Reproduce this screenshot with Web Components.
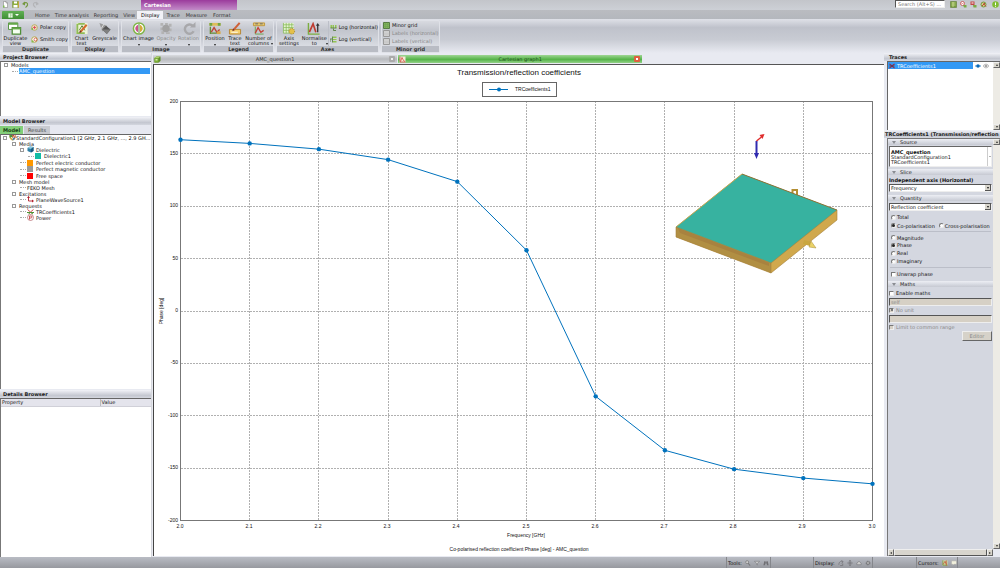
<!DOCTYPE html>
<html lang="en">
<head>
<meta charset="utf-8">
<title>CADFEKO results</title>
<style>
html, body { margin: 0; height: 100%; }
body { font: 5px/6px "DejaVu Sans", sans-serif; color: #111; background: #e8eaf1; overflow: hidden; }
</style>
</head>
<body>
<fk-app></fk-app>
<script>
const ICONS = {
  file: '<path d="M3 1h5l3 3v9H3z" fill="#fff" stroke="#777"/><path d="M8 1v3h3" fill="none" stroke="#777"/><path d="M2 9h3v4H2z" fill="#7dbd4b"/>',
  save: '<path d="M1 1h12v12H1z" fill="#8cae3d" stroke="#758d37"/><path d="M4 1h6v4H4zM3 8h8v5H3z" fill="#fff"/><path d="M12 1h2v12h-2" fill="#c7a43a"/>',
  undo: '<path d="M3 5c5-4 9-1 8 3-1 3-3 4-4 5" fill="none" stroke="#74983e" stroke-width="2.4"/><path d="M0 6l6-5v8z" fill="#74983e"/>',
  redo: '<path d="M11 5c-5-4-9-1-8 3 1 3 3 4 4 5" fill="none" stroke="#b2b3b6" stroke-width="2.4"/><path d="M14 6L8 1v8z" fill="#b2b3b6"/>',
  dup: '<path d="M0 1h10v7H0z" fill="#fff" stroke="#4f8f39"/><path d="M0 1h10v2H0z" fill="#65a84a"/><path d="M4 6h9v7H4z" fill="#f4fff0" stroke="#4f8f39" stroke-width="1.4"/><path d="M4 6h9v2H4z" fill="#65a84a"/>',
  polar: '<circle cx="7" cy="7" r="5.5" fill="#fff" stroke="#b6a94e" stroke-width="2"/><path d="M3 7h8M7 3v8" stroke="#c34"/><circle cx="7" cy="7" r="2.5" fill="#d9534a"/><path d="M1 8h3v4H1z" fill="#86b84a"/>',
  smith: '<circle cx="7" cy="7" r="5.5" fill="#fff" stroke="#b6a94e" stroke-width="2"/><circle cx="9" cy="7" r="3" fill="none" stroke="#c43" stroke-width="1.5"/><path d="M1 9h4v4H1z" fill="#86b84a"/>',
  charttext: '<path d="M1 1h12v12H1z" fill="#eef3d8"/><path d="M1 2h2v11H1zM3 1h7v2H3zM3 11h7v2H3z" fill="#8fbb55"/><path d="M4 9l3-5 3 5" fill="none" stroke="#567b2b"/><path d="M5 11l7-8" stroke="#d36b2c" stroke-width="2.2"/><path d="M4 12l1-3 1.5 1.5z" fill="#633"/>',
  grey: '<path d="M1 1l8 3 1 5-6 1z" fill="#999"/><path d="M3 7l3-5" stroke="#ddd"/><path d="M4 8l4-4 5 4-4 5z" fill="#555"/><path d="M4 8h9l-4 5z" fill="#808080"/>',
  image: '<circle cx="7" cy="7" r="6" fill="#fff" stroke="#7fb546" stroke-width="1.6"/><path d="M7 2v10" stroke="#4a7f2d"/><path d="M6 3C2 5 2 9 6 11z" fill="#c9528c"/><path d="M8 3c4 2 4 6 0 8z" fill="#d6a63c"/>',
  opacity: '<path d="M1 1h3v3H1zM6 1h3v3H6zM10 2h3v3h-3zM1 6h3v3H1zM10 7h3v3h-3zM2 10h3v3H2zM7 11h4v2H7z" fill="#b3b3b3"/><circle cx="7" cy="7" r="4" fill="#a2a2a2"/>',
  rotate: '<path d="M11 4a5 5 0 1 0 1 6" fill="none" stroke="#a8a8ab" stroke-width="2.6"/><path d="M8 6h6V0z" fill="#a8a8ab"/>',
  position: '<path d="M1 1h12v3H1z" fill="#dfbd5a"/><path d="M1 1h3v3H1zM10 1h3v3h-3z" fill="#70a545"/><path d="M2 13V5M2 12h7" stroke="#658d37" stroke-width="1.4"/><path d="M3 11l3-5 3 5 3-3" fill="none" stroke="#bd4636" stroke-width="1.5"/><path d="M9 10h4v3H9z" fill="#d6a746"/>',
  trace: '<path d="M1 8h12v5H1z" fill="#f5d06e" stroke="#b58432"/><path d="M3 11h7" stroke="#fff"/><path d="M5 9l7-8" stroke="#cf6037" stroke-width="2.2"/><path d="M4 10l1-3 1.5 1.5z" fill="#633"/>',
  cols: '<path d="M1 1h12v3H1z" fill="#e5ca73" stroke="#c0953b"/><path d="M3 2h3M8 2h3" stroke="#666"/><path d="M3 5v8h9" fill="none" stroke="#6ca34b"/><path d="M3 12l3-6 3 5 3-2" fill="none" stroke="#c43f34" stroke-width="1.4"/>',
  axis: '<path d="M1 1h11v11H1z" fill="#e4f3cf"/><path d="M1 1v11h11M4 1v11M7 1v11M10 1v11M1 3h11M1 6h11M1 9h11" fill="none" stroke="#86b956" stroke-width=".8"/><circle cx="10" cy="10" r="3" fill="#e4c04a" stroke="#9d7a24" stroke-dasharray="1 1"/>',
  norm: '<path d="M1 1v12h12" fill="none" stroke="#7cad41" stroke-width="1.5"/><path d="M2 11L6 2l3 9" fill="none" stroke="#bf3d31" stroke-width="1.8"/><path d="M11 3v8" fill="none" stroke="#333" stroke-width="1.4"/><path d="M9 4l2-3 2 3z" fill="#333"/>',
  logh: '<path d="M1 2h3v6H1zM5 2h3v6H5zM10 2h3v6h-3z" fill="#93c453"/><path d="M1 8h12M7 9v4h5" fill="none" stroke="#4d7630" stroke-width="1.6"/>',
  logv: '<path d="M6 1h7v3H6zM6 6h7v2H6zM6 10h7v3H6z" fill="#93c453"/><path d="M5 1v12M0 12V6h4" fill="none" stroke="#4d7630" stroke-width="1.6"/>',
  minor: '<path d="M1 1h12v12H1z" fill="#81b45a" stroke="#567a44" stroke-width="2"/><path d="M5 1v12M9 1v12M1 5h12M1 9h12" stroke="#6d9f52"/>',
  gbox: '<path d="M1 1h12v12H1z" fill="#d0d0d0" stroke="#999" stroke-width="2"/><path d="M1 8h12" stroke="#bbb"/>',
  app: '<path d="M1 1h12v12H1z" fill="#e7f6e2"/><path d="M7 1v12M7 6h6" stroke="#57a64a"/>',
  cube: '<path d="M1 4l4-3h8v9l-4 3H1z" fill="#5d8a2a"/><path d="M1 4l4-3h8L9 4z" fill="#b0d26c"/><path d="M1 4h8v9H1z" fill="#7cad37"/><path d="M3 6h4v3H3z" fill="#d5ecaa"/>',
  graph: '<path d="M1 1h12v12H1z" fill="#f5e9d6"/><path d="M2 1v11h11" fill="none" stroke="#c44" stroke-width="1.5"/><path d="M3 11l3-8 3 6 3 2" fill="none" stroke="#d04538" stroke-width="1.5"/>',
  blue: '<path d="M1 4l5-3 7 1v8l-5 3-7-3z" fill="#2d7fa6"/><path d="M1 4l5-3 7 1-5 4z" fill="#8ecae0"/><path d="M8 6l5-4v8l-5 3z" fill="#195a80"/>',
  shield: '<path d="M1 1h12v5c0 4-4 7-6 7S1 10 1 6z" fill="#d9b33f"/><path d="M1 1h6v6H1z" fill="#4b9042"/><path d="M7 7h6c-1 4-4 6-6 6z" fill="#4d7cae"/><path d="M7 1h6v6H7z" fill="#c24a37"/><path d="M4 6l3 3 5-7" fill="none" stroke="#fff" stroke-width="1.5"/>',
  wave: '<path d="M3 1v9h9" fill="none" stroke="#b3202b" stroke-width="1.8"/><path d="M0 4l3-4 3 4zM10 7l4 3-4 3z" fill="#b3202b"/>',
  tr: '<path d="M1 3l6 5 6-5" fill="none" stroke="#c33" stroke-width="1.8"/><path d="M0 9h14M3 12l4-3 5 3" fill="none" stroke="#4f9134" stroke-width="2"/>',
  power: '<circle cx="7" cy="7" r="6" fill="#fff" stroke="#ad555a" stroke-width="1.3"/><path d="M5 11V4h3a2 2 0 0 1 0 4H5" fill="none" stroke="#b22" stroke-width="1.4"/>',
  trx: '<path d="M1 2l6 5 6-5M1 12l6-5 6 5" fill="none" stroke="#992c45" stroke-width="2.6"/><path d="M1 7h12" stroke="#473b55" stroke-width="2"/>',
  dot: '<path d="M0 7h14" stroke="#1c78c0" stroke-width="2"/><circle cx="7" cy="7" r="4" fill="#0a68b7"/>',
  eye: '<path d="M0 7c4-6 10-6 14 0-4 6-10 6-14 0z" fill="#ddd" stroke="#888"/><circle cx="7" cy="7" r="2.5" fill="#999"/>',
  t1: '<path d="M1 1h12v12H1z" fill="#749c3d" stroke="#567328"/><path d="M3 4h8M3 8h8M6 2v10" stroke="#dce7a4" stroke-width="1.4"/>',
  t2: '<circle cx="5" cy="5" r="4" fill="#fff" stroke="#c54444" stroke-width="1.6"/><path d="M6 8h7v5H8z" fill="#7aa945"/><path d="M3 5h4" stroke="#c33"/>',
  t3: '<path d="M1 1h8v7H1z" fill="#c34747"/><path d="M3 3h4v2H3z" fill="#fff"/><path d="M6 8h7v5H7z" fill="#7aa945"/>',
  t4: '<circle cx="7" cy="7" r="5" fill="#d6ce86" stroke="#74983d" stroke-width="2"/><path d="M4 10l6-6M7 5l5 6" stroke="#b64b34" stroke-width="2"/>',
  help: '<circle cx="7" cy="7" r="6.5" fill="#7fbd30"/><path d="M7 3v5M7 9.500v2" stroke="#fff" stroke-width="2"/>',
  g1: '<circle cx="5" cy="5" r="3.500" fill="#ccc" stroke="#777" stroke-width="1.6"/><path d="M7 7l5 6" stroke="#77777a" stroke-width="2.4"/>',
  g2: '<path d="M1 3h12L8 8v4L6 10V8z" fill="#d0d0d0" stroke="#77777a" stroke-width="1.4"/>',
  g3: '<path d="M1 12l2-9h3v3h2V3h3l2 9H9V8H5v4z" fill="#6f6f73"/>',
  g4: '<path d="M2 11c0-7 5-9 9-7M8 1l4 3-4 4M5 13h6V8" fill="none" stroke="#77777c" stroke-width="2"/>',
  g5: '<path d="M7 1v12M1 7h12M5 3l2-2 2 2M5 11l2 2 2-2" fill="none" stroke="#727276" stroke-width="2"/>',
  g6: '<path d="M2 7l5-4 5 4v4H2z" fill="#ccc" stroke="#77777a" stroke-width="1.4"/>',
  g7: '<circle cx="7" cy="7" r="4" fill="#aaa" stroke="#747478" stroke-width="3" stroke-dasharray="2 1"/>',
  note: '<path d="M1 2h12v8H7l-3 3v-3H1z" fill="#f1f0dd" stroke="#999"/>',
  cursor: '<path d="M1 1h12v12H1z" fill="#cfdc9b"/><path d="M2 1v11h11" fill="none" stroke="#587e2e" stroke-width="1.500"/><path d="M3 10l4-7 3 7M10 1v12" fill="none" stroke="#c2452f" stroke-width="1.600"/>'
};

function component(name, css, html, init) {
  const tpl = document.createElement('template');
  tpl.innerHTML = `<style>*{box-sizing:border-box}:host{box-sizing:border-box;display:block}${css}</style>${html}`;
  customElements.define(name, class extends HTMLElement {
    constructor() {
      super();
      this.attachShadow({ mode: 'open' }).append(tpl.content.cloneNode(true));
    }
    connectedCallback() { if (init) init(this, this.shadowRoot); }
  });
}

component('fk-icon', ':host{flex:none;width:7px;height:7px}svg{display:block;width:100%;height:100%}', '', (el, root) => {
  if (!root.querySelector('svg'))
    root.innerHTML += `<svg viewBox="0 0 14 14" aria-hidden="true">${ICONS[el.getAttribute('name')]}</svg>`;
});

component('fk-titlebar', `
  :host{display:flex;align-items:flex-start;height:10px;background:linear-gradient(#c3c5ca,#cdd0d6);}
  .quick{display:flex;gap:3px;width:141px;padding:1px 0 0 2px}
  .context{width:96px;height:10px;padding:2px 3px;color:#fff;font-weight:bold;line-height:6px;background:linear-gradient(#9b3b9c,#c28bc8)}
  .right{margin-left:auto;display:flex;gap:3px;padding:0 1px 0 0;align-items:center}
  input{font:inherit;width:50px;height:8px;margin:0 2px 0 0;padding:0 2px;border:1px solid #999;border-color:#555 #eee #eee #555;background:#fff}
  input::placeholder{color:#777}
`, `
  <div class="quick"><fk-icon name="file"></fk-icon><fk-icon name="save"></fk-icon><fk-icon name="undo"></fk-icon><fk-icon name="redo"></fk-icon></div>
  <div class="context">Cartesian</div>
  <div class="right"><input type="text" placeholder="Search (Alt+S) ..." aria-label="Search"><fk-icon name="t1"></fk-icon><fk-icon name="t2"></fk-icon><fk-icon name="t3"></fk-icon><fk-icon name="t4"></fk-icon><fk-icon name="help" style="margin-left:2px"></fk-icon></div>
`);

component('fk-tabs', `
  :host{display:flex;align-items:flex-end;height:9px;background:linear-gradient(#babcc1,#b4b7bd)}
  button{font:inherit;color:#333;border:0;background:none;height:8px;margin:0;padding:0 3px;line-height:8px;white-space:nowrap}
  .tight{padding:0 2px}
  .app{width:22px;display:flex;align-items:center;justify-content:center;gap:2px;margin:0 8px 0 2px;padding:0;background:linear-gradient(#61b055,#3f8f35);border-radius:1px 1px 0 0}
  .app fk-icon{width:5px;height:5px}
  .app i{border:2px solid transparent;border-top-color:#fff;border-bottom:0}
  .on{background:#f1f2f7;color:#000;padding:0 4px;}
`, `
  <button class="app" aria-label="Application menu"><fk-icon name="app"></fk-icon><i></i></button>
  <button>Home</button><button class="tight">Time analysis</button><button>Reporting</button><button class="tight">View</button><button class="on">Display</button><button>Trace</button><button>Measure</button><button>Format</button>
`);

component('fk-group', `
  :host{display:flex;flex-direction:column;height:33px;border:1px solid #dfe1e7;border-radius:2px;background:linear-gradient(#d8dae0,#c2c5cd 30%,#cfd2d9 60%,#e3e5eb)}
  .body{flex:1;display:flex;min-height:0}
  .name{height:6px;line-height:6px;font-weight:bold;text-align:center;color:#333;background:#b9bcc4}
`, '<div class="body"><slot></slot></div><div class="name"></div>', (el, root) => {
  root.querySelector('.name').textContent = el.getAttribute('label');
});

component('fk-tool', `
  button{font:inherit;color:inherit;width:100%;padding:1px 0 0;margin:0;border:0;background:none;display:flex;flex-direction:column;align-items:center}
  :host([off]){color:#888}
  fk-icon{width:14px;height:13px}
  span{line-height:5px;text-align:center;white-space:pre-line;padding-top:1px}
  i{display:none;border:1px solid transparent;border-top:2px solid #222;border-bottom:0;margin-top:3px}
  :host([menu]) i{display:block}
  :host([corner]) i{display:block;align-self:flex-end;margin-top:-3px}
`, '<button><fk-icon></fk-icon><span><slot></slot></span><i></i></button>', (el, root) => {
  const b = root.querySelector('button');
  b.disabled = el.hasAttribute('off');
  const icon = document.createElement('fk-icon');
  icon.setAttribute('name', el.getAttribute('icon'));
  root.querySelector('fk-icon').replaceWith(icon);
});

component('fk-small', `
  button{font:inherit;color:inherit;padding:0;margin:0;border:0;background:none;display:flex;align-items:center;gap:2px;white-space:nowrap}
  :host([off]){color:#888}
`, '<button><slot name="i"></slot><slot></slot></button>', (el, root) => {
  root.querySelector('button').disabled = el.hasAttribute('off');
});

component('fk-ribbon', `
  :host{display:flex;gap:2px;height:34px;padding:1px 2px 0;background:linear-gradient(#dfe1e8,#bfc2cb 25%,#c8cbd3 60%,#e8eaf1)}
  .col{display:flex;flex-direction:column;justify-content:space-around;padding:0 0 1px 3px}
  .sep{border-left:1px solid #bcbfc8}
`, `
  <fk-group label="Duplicate" style="width:67px"><fk-tool icon="dup" style="width:26px">Duplicate
view</fk-tool><div class="col"><fk-small><fk-icon slot="i" name="polar"></fk-icon>Polar copy</fk-small><fk-small><fk-icon slot="i" name="smith"></fk-icon>Smith copy</fk-small></div></fk-group>
  <fk-group label="Display" style="width:48px"><fk-tool icon="charttext" style="width:19px">Chart
text</fk-tool><fk-tool icon="grey" style="width:27px">Greyscale</fk-tool></fk-group>
  <fk-group label="Image" style="width:80px"><fk-tool icon="image" menu style="width:33px">Chart image</fk-tool><fk-tool icon="opacity" off menu style="width:22px">Opacity</fk-tool><fk-tool icon="rotate" off menu style="width:23px">Rotation</fk-tool></fk-group>
  <fk-group label="Legend" style="width:71px"><fk-tool icon="position" menu style="width:22px">Position</fk-tool><fk-tool icon="trace" style="width:18px">Trace
text</fk-tool><fk-tool icon="cols" corner style="width:29px">Number of
columns</fk-tool></fk-group>
  <fk-group label="Axes" style="width:103px"><fk-tool icon="axis" style="width:24px">Axis
settings</fk-tool><fk-tool icon="norm" corner style="width:27px">Normalise
to</fk-tool><div class="col sep" style="padding-left:1px"><fk-small><fk-icon slot="i" name="logh"></fk-icon>Log (horizontal)</fk-small><fk-small><fk-icon slot="i" name="logv"></fk-icon>Log (vertical)</fk-small></div></fk-group>
  <fk-group label="Minor grid" style="width:59px"><div class="col" style="padding-left:1px"><fk-small><fk-icon slot="i" name="minor"></fk-icon>Minor grid</fk-small><fk-small off><fk-icon slot="i" name="gbox"></fk-icon>Labels (horizontal)</fk-small><fk-small off><fk-icon slot="i" name="gbox"></fk-icon>Labels (vertical)</fk-small></div></fk-group>
`);

component('fk-heading', `
  :host{flex:none;height:8px;line-height:8px;padding-left:3px;font-weight:bold;color:#222;white-space:nowrap;overflow:hidden;background:linear-gradient(#f1f2f7,#c4c7d0 70%,#d4d7df)}
`, '<slot></slot>');

component('fk-node', `
  :host{display:flex;align-items:center;height:6px;white-space:nowrap;padding-left:calc(3px + 8px * var(--level, 0))}
  :host([tall]){height:7px}
  :host([root]){padding-left:2px}
  .box{flex:none;width:7px;display:flex}
  .box i{width:4px;height:4px;border:1px solid #999;background:#fff}
  .box b{width:6px;border-top:1px dotted #aaa}
  ::slotted(fk-icon){margin-right:2px}
  :host([root]) ::slotted(fk-icon){margin-right:0}
  :host([root]) .box{width:6px}
  ::slotted(.sw){flex:none;width:6px;height:6px;margin-right:3px}
  .t{flex:1;display:flex;align-items:center;min-width:0}
  :host([selected]) .t{background:#3399f5;color:#fff}
`, '<span class="box"></span><span class="t"><slot></slot></span>', (el, root) => {
  el.style.setProperty('--level', el.getAttribute('level') || 0);
  root.querySelector('.box').innerHTML = el.hasAttribute('open') ? '<i></i>' : '<b></b>';
});

component('fk-left', `
  :host{display:flex;flex-direction:column;width:152px;border-right:1px solid #d5d7dd}
  .tree{background:#fff;border-left:1px solid #777;border-top:1px solid #666;overflow:hidden;flex-basis:0;min-height:0}
  .tabs{display:flex;height:9px;align-items:flex-end;background:#e6e8f0}
  .tabs button{font:inherit;height:8px;line-height:8px;padding:0 4px;border:0;background:#c8cad0;color:#444;margin-right:1px}
  .tabs .on{background:#84cf79;color:#153d12;font-weight:bold;padding:0 3px}
  table{width:100%;border-collapse:collapse;line-height:7px}
  th{font-weight:normal;text-align:left;background:#e4e4ec;padding:0 1px;border-bottom:1px solid #d0d0d8}
  th + th{border-left:1px solid #bbb}
  fk-heading{margin-top:1px}
`, `
  <fk-heading style="margin-top:0">Project Browser</fk-heading>
  <div class="tree" style="flex-grow:54"><fk-node open>Models</fk-node><fk-node level="1" selected style="margin-right:1px">AMC_question</fk-node></div>
  <fk-heading>Model Browser</fk-heading>
  <div class="tabs"><button class="on">Model</button><button>Results</button></div>
  <div class="tree" style="flex-grow:257">
    <fk-node root open><fk-icon name="shield"></fk-icon>StandardConfiguration1 [2 GHz, 2.1 GHz, ..., 2.9 GH...</fk-node>
    <fk-node level="1" open>Media</fk-node>
    <fk-node level="2" open><fk-icon name="blue"></fk-icon>Dielectric</fk-node>
    <fk-node level="3" tall><span class="sw" style="background:#12bca5"></span>Dielectric1</fk-node>
    <fk-node level="2"><span class="sw" style="background:#ff9800"></span>Perfect electric conductor</fk-node>
    <fk-node level="2" tall><span class="sw" style="background:#999"></span>Perfect magnetic conductor</fk-node>
    <fk-node level="2"><span class="sw" style="background:#f00"></span>Free space</fk-node>
    <fk-node level="1" open>Mesh model</fk-node>
    <fk-node level="2">FEKO Mesh</fk-node>
    <fk-node level="1" open>Excitations</fk-node>
    <fk-node level="2"><fk-icon name="wave"></fk-icon>PlaneWaveSource1</fk-node>
    <fk-node level="1" open>Requests</fk-node>
    <fk-node level="2"><fk-icon name="tr"></fk-icon>TRCoefficients1</fk-node>
    <fk-node level="2"><fk-icon name="power"></fk-icon>Power</fk-node>
  </div>
  <fk-heading>Details Browser</fk-heading>
  <div class="tree" style="flex-grow:159"><table><colgroup><col style="width:66%"><col></colgroup><tr><th>Property</th><th>Value</th></tr></table></div>
`);

component('fk-chart', `
  :host{flex:1;min-height:0;background:#fff;border-top:1px solid #555;border-left:1px solid #444;font-family:"Liberation Sans",Arial,sans-serif}
  svg{display:block;width:100%;height:100%}
  text{font-size:5px;fill:#111}
  .title{font-size:8px}
  .grid line{stroke:#b0b0b0;stroke-dasharray:2 1}
`, '<svg viewBox="0 0 730 491" role="img" aria-label="Transmission/reflection coefficients"></svg>', (el, root) => {
  const values = [163.5, 160, 154.5, 144.5, 123.5, 58, -81.5, -133, -151, -159.5, -165];
  const X = i => 26.5 + i * 69.2;
  const Y = v => 36.5 + (200 - v) * 419 / 400;
  const snap = n => Math.floor(n) + .5;
  let s = '<g class="grid">', labels = '';
  for (let i = 0; i <= 10; i++) {
    if (i && i < 10) s += `<line x1="${snap(X(i))}" x2="${snap(X(i))}" y1="36" y2="455"/>`;
    labels += `<text x="${Math.round(X(i)) - 1}" y="463" text-anchor="middle">${(2 + i / 10).toFixed(1)}</text>`;
  }
  for (let v = 200; v >= -200; v -= 50) {
    if (Math.abs(v) < 200) s += `<line y1="${snap(Y(v))}" y2="${snap(Y(v))}" x1="27" x2="718"/>`;
    labels += `<text x="24" y="${Math.round(Y(v)) + 1}" text-anchor="end">${v}</text>`;
  }
  s += '</g><rect x="26.5" y="36.5" width="692" height="419" fill="none" stroke="#777"/>' + labels;
  s += `
    <text class="title" x="365" y="10" text-anchor="middle">Transmission/reflection coefficients</text>
    <rect x="328.5" y="17.500" width="74" height="14" fill="#fff" stroke="#666"/>
    <path d="M335 24.500h19" stroke="#0072bd"/><circle cx="345" cy="24.500" r="2" fill="#0072bd"/>
    <text x="361" y="26">TRCoefficients1</text>
    <text x="372" y="472" text-anchor="middle">Frequency [GHz]</text>
    <text x="365" y="486" text-anchor="middle">Co-polarised reflection coefficient Phase [deg] - AMC_question</text>
    <text transform="translate(9 246) rotate(-90)" text-anchor="middle">Phase [deg]</text>
    <polygon points="588,109 683,145 683,155 617,208 522,172 522,162" fill="#d0a84c"/>
    <polygon points="522,162 617,198 617,208 522,172" fill="#b18f43"/>
    <polygon points="524,163 615,198 615,201 526,168" fill="#a8823f"/>
    <path d="M638.500 129v-4h4.500v5" stroke="#b38e32" stroke-width="2" fill="none"/>
    <polygon points="588,109 683,145 617,198 522,162" fill="#37b2a0"/>
    <path d="M522 162L588 109" stroke="#c4a653" fill="none"/>
    <path d="M588 109L683 145" stroke="#8a7438" fill="none"/>
    <path d="M522 162V172L617 208L683 155V145L617 198V208M522 162L617 198" stroke="#a5803a" stroke-width=".6" fill="none"/>
    <path d="M649.500 177l7 2" stroke="#c9a63f" stroke-width="4"/><path d="M655 182l2-6 5 7z" fill="#ead268" stroke="#a88c34" stroke-width=".5"/>
    <path d="M602.500 76v13" stroke="#302bb0" stroke-width="2"/><path d="M600 88h5l-2.500 6z" fill="#302bb0"/>
    <path d="M602.500 76l5-4" stroke="#df2b2b" stroke-width="1.500"/><path d="M605.500 70l5-1-2 5z" fill="#df2b2b"/>
    <polyline fill="none" stroke="#0072bd" points="${values.map((v, i) => X(i) + ',' + Y(v)).join(' ')}"/>
    ${values.map((v, i) => `<circle cx="${X(i)}" cy="${Y(v)}" r="2.2" fill="#0072bd"/>`).join('')}`;
  root.querySelector('svg').innerHTML = s;
});

component('fk-center', `
  :host{flex:1;min-width:0;display:flex;flex-direction:column;padding:2px 0 1px 1px}
  .tabs{display:flex;gap:1px;height:9px;padding-bottom:1px}
  .tab{width:33.4%;display:flex;align-items:center;background:linear-gradient(#d9dbdf,#b7b9bd 50%,#d0d2d7);color:#333}
  .tab.on{background:linear-gradient(#9ed693,#55b348 55%,#93d288);color:#1c4d17}
  .tab button{font:inherit;color:inherit;border:0;background:none;padding:0;margin:0}
  .name{flex:1}
  .tab .x{width:6px;height:6px;margin-right:2px;background:#eee;border:2px solid #aaa;border-radius:1px}
  .on .x{background:#fff;border-color:#df6040}
  fk-icon{margin-left:1px}
`, `
  <div class="tabs">
    <div class="tab"><fk-icon name="cube"></fk-icon><button class="name">AMC_question1</button><button class="x" aria-label="Close"></button></div>
    <div class="tab on"><fk-icon name="graph"></fk-icon><button class="name">Cartesian graph1</button><button class="x" aria-label="Close"></button></div>
  </div>
  <fk-chart></fk-chart>
`);

component('fk-scroll', `
  :host{display:flex;flex-direction:column;justify-content:space-between;flex:none;width:7px;background:#edebe5}
  :host([wide]){flex-direction:row;width:auto;height:7px}
  i{width:7px;height:6px;display:flex;align-items:center;justify-content:center;background:#d9d6cc;border:1px solid #fff;border-color:#eee #666 #666 #eee}
  i::after{content:"";border:1px solid transparent;border-bottom:2px solid #333;border-top:0}
  i.b::after{transform:rotate(180deg)}
  :host([wide]) i{width:6px;height:7px}
  :host([wide]) i::after{transform:rotate(-90deg)}
  :host([wide]) i.b::after{transform:rotate(90deg)}
  .thumb{display:none;flex:1;background:#d8d5cd;border:1px solid #eee;border-color:#eee #555 #555 #eee}
  :host([wide]) .thumb{display:block}
`, '<i></i><div class="thumb"></div><i class="b"></i>');

component('fk-section', `
  :host{height:6px;display:flex;align-items:center;gap:4px;padding-left:4px;margin-bottom:var(--after,2px);color:#222;background:linear-gradient(#eceef4,#c6c9d2)}
  i{border:2px solid transparent;border-top:3px solid #8a8c92;border-bottom:0}
`, '<i></i><slot></slot>');

component('fk-traces', `
  :host{flex:none;display:flex;height:69px;border-top:1px solid #666;border-left:1px solid #666;background:#fff}
  .list{flex:1;min-width:0}
  .row{display:flex;align-items:center;height:7px;gap:2px}
  .name{flex:1;display:flex;align-items:center;gap:2px;padding-left:1px;background:#3399f5;color:#fff;height:7px}
  .row fk-icon{width:6px;height:6px}
  .gap{width:2px}
`, `<div class="list"><div class="row"><span class="name"><fk-icon name="trx"></fk-icon>TRCoefficients1</span><fk-icon name="dot"></fk-icon><fk-icon name="eye"></fk-icon><span class="gap"></span></div></div><fk-scroll></fk-scroll>`);

component('fk-props', `
  :host{flex:1;min-height:0;display:flex;flex-direction:column;border-left:1px solid #777;border-top:1px solid #777}
  .area{flex:1;display:flex;min-height:0}
  .form{flex:1;min-width:0;overflow:hidden;background:#d4d7e0;display:flex;flex-direction:column}
  .pick{margin:0 1px 2px;height:8px;display:grid}
  select{grid-area:1/1;appearance:none;font:inherit;color:#111;width:100%;height:8px;line-height:6px;margin:0;padding:0 7px 0 1px;background:#fff;border:1px solid #555;border-right-color:#eee;border-bottom-color:#eee;border-radius:0}
  .pick i{grid-area:1/1;justify-self:end;align-self:center;width:6px;height:6px;margin-right:1px;pointer-events:none;background:#d8d5cc;border:1px solid #555;border-width:0 1px 1px 0;display:flex;align-items:center;justify-content:center}
  .pick i::after{content:"";border:1px solid transparent;border-top:2px solid #111;border-bottom:0}
  .src{display:flex;margin:0 1px 2px;height:21px;background:#fff;border:1px solid #666;border-right-color:#eee;border-bottom-color:#eee;padding:2px 1px;line-height:6px}
  .src div{flex:1}
  .src p{margin:0;height:5px;line-height:6px}
  .src > i{width:4px;margin:-2px -1px;border-left:1px solid #ccc;display:flex;align-items:center}
  .src > i::after{content:"";margin-left:1px;border:1px solid transparent;border-top-color:#666}
  .opts{display:flex;gap:4px;height:8px;align-items:center;padding-left:3px}
  .line{height:1px;background:#bbbec8;margin:2px 2px}
  .line.up{margin-top:1px}
  label{display:flex;align-items:center;gap:1px;white-space:nowrap}
  label.h{display:block;font-weight:bold;height:7px;padding-left:1px;color:#111}
  input[type=radio],input[type=checkbox]{appearance:none;flex:none;margin:0;width:5px;height:5px;background:#fff;border:1px solid #777;border-right-color:#eee;border-bottom-color:#eee;display:grid;place-items:center}
  input[type=radio]{border-radius:50%}
  input[type=radio]:checked::after{content:"";width:3px;height:3px;border-radius:50%;background:#222}
  input[type=checkbox]:checked::after{content:"";width:2px;height:2px;background:#777}
  input[type=checkbox]:disabled{background:#d6d0c5}
  .off{color:#888}
  .chk{padding-left:1px}
  .chk label{gap:2px}
  input[type=text]{font:inherit;color:#888;height:8px;margin:1px 1px 0;padding:0 1px;background:#d6d0c5;border:1px solid #555;border-right-color:#eee;border-bottom-color:#eee}
  .ed{font:inherit;align-self:flex-end;width:30px;height:10px;margin:0 1px;padding:0;color:#888;background:#d6d2c9;border:1px solid #eee;border-right-color:#666;border-bottom-color:#666}
`, `
  <div class="area"><div class="form">
    <fk-section style="--after:1px">Source</fk-section>
    <div class="src"><div><p><b>AMC_question</b></p><p>StandardConfiguration1</p><p>TRCoefficients1</p></div><i></i></div>
    <fk-section>Slice</fk-section>
    <label class="h" for="axis">Independent axis (Horizontal)</label>
    <div class="pick" style="margin-bottom:3px"><select id="axis"><option>Frequency</option></select><i></i></div>
    <fk-section>Quantity</fk-section>
    <div class="pick"><select aria-label="Quantity"><option>Reflection coefficient</option></select><i></i></div>
    <div class="opts"><label><input type="radio" name="q">Total</label></div>
    <div class="opts" style="height:9px"><label><input type="radio" name="q" checked>Co-polarisation</label><label><input type="radio" name="q">Cross-polarisation</label></div>
    <div class="line up"></div>
    <div class="opts" style="height:7px"><label><input type="radio" name="c">Magnitude</label></div>
    <div class="opts"><label><input type="radio" name="c" checked>Phase</label></div>
    <div class="opts"><label><input type="radio" name="c">Real</label></div>
    <div class="opts"><label><input type="radio" name="c">Imaginary</label></div>
    <div class="line"></div>
    <div class="opts"><label><input type="checkbox">Unwrap phase</label></div>
    <div style="height:3px"></div>
    <fk-section>Maths</fk-section>
    <div class="opts chk"><label><input type="checkbox">Enable maths</label></div>
    <input type="text" value="self" disabled aria-label="Expression">
    <div class="opts chk off"><label><input type="checkbox" checked disabled>No unit</label></div>
    <input type="text" disabled aria-label="Unit">
    <div class="opts chk off"><label><input type="checkbox" disabled>Limit to common range</label></div>
    <button class="ed" disabled>Editor</button>
  </div><fk-scroll></fk-scroll></div>
  <fk-scroll wide style="margin-right:7px"></fk-scroll>
`);

component('fk-right', `
  :host{display:flex;flex-direction:column;width:116px;padding:0 0 1px}
  fk-heading{padding-left:1px}
  fk-traces,fk-props{margin-left:3px}
`, `
  <fk-heading style="padding-left:5px">Traces</fk-heading><fk-traces></fk-traces>
  <fk-heading>TRCoefficients1 (Transmission/reflection</fk-heading>
  <fk-props></fk-props>
`);

component('fk-status', `
  :host{display:flex;justify-content:flex-end;height:11px;padding-right:41px;background:linear-gradient(#b9bcc4,#97999f)}
  .g{display:flex;align-items:center;gap:3px;padding-left:1px;border-left:1px solid #85878c}
  .g fk-icon{width:6px;height:6px}
`, `
  <div class="g" style="width:44px"><span>Tools:</span><fk-icon name="g1"></fk-icon><fk-icon name="g2"></fk-icon><fk-icon name="g3"></fk-icon></div><div class="g" style="width:43px"></div>
  <div class="g" style="width:59px"><span>Display:</span><fk-icon name="g4"></fk-icon><fk-icon name="g5"></fk-icon><fk-icon name="g6"></fk-icon><fk-icon name="g7"></fk-icon></div><div class="g" style="width:44px"></div>
  <div class="g" style="width:41px"><span>Cursors:</span><fk-icon name="cursor"></fk-icon><fk-icon name="note"></fk-icon></div><div class="g"></div>
`);

component('fk-app', `
  :host{display:flex;flex-direction:column;height:100vh}
  main{flex:1;min-height:0;display:flex}
`, `
  <fk-titlebar></fk-titlebar><fk-tabs></fk-tabs><fk-ribbon></fk-ribbon>
  <main><fk-left></fk-left><fk-center></fk-center><fk-right></fk-right></main>
  <fk-status></fk-status>
`);
</script>
</body>
</html>
